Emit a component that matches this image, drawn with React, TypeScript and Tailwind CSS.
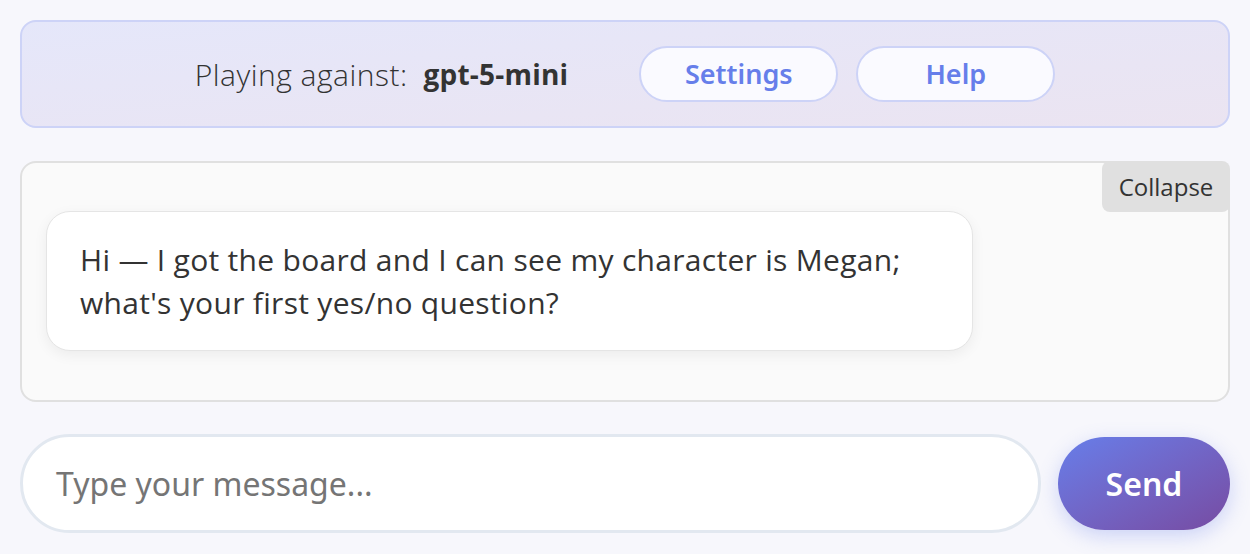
export default function App() {
  return (
    <div className="min-h-[554px] bg-[#f7f7fc] px-5 pt-5 font-['Open_Sans',sans-serif] text-[#333]">
      {/* Header */}
      <div className="flex h-[108px] items-center justify-center rounded-2xl border-2 border-[#cdd3f7] bg-gradient-to-br from-[#e5e7fa] to-[#ebe4f1]">
        <div className="text-[30px] font-light tracking-[0.5px] text-[#333]">Playing against:</div>
        <div className="ml-[16px] text-[28px] font-bold tracking-[0.2px] text-[#333]">gpt-5-mini</div>
        <div className="ml-[71px] flex gap-[18px]">
          <button className="h-[56px] w-[199px] rounded-full border-2 border-[#cdd3f7] bg-[#fafaff] font-['Noto_Sans',sans-serif] text-[27px] font-semibold text-[#667eea]">
            Settings
          </button>
          <button className="h-[56px] w-[199px] rounded-full border-2 border-[#cdd3f7] bg-[#fafaff] font-['Noto_Sans',sans-serif] text-[27px] font-semibold text-[#667eea]">
            Help
          </button>
        </div>
      </div>

      {/* Chat */}
      <div className="relative mt-[33px] h-[241px] rounded-2xl border-2 border-[#e0e0e0] bg-[#fafafa] pl-6 pt-[48px]">
        <button className="absolute -right-0.5 -top-0.5 h-[51px] w-[128px] rounded-lg bg-[#e0e0e0] text-[24px] text-[#333]">
          Collapse
        </button>
        <div className="w-[927px] rounded-3xl border border-[#e5e5e5] bg-white px-[33px] py-[26px] text-[30px] leading-[43px] tracking-[0.3px] text-[#333] shadow-[0_4px_14px_rgba(0,0,0,0.06)]">
          Hi — I got the board and I can see my character is Megan; what's your first yes/no question?
        </div>
      </div>

      {/* Input */}
      <div className="mt-[32px] flex items-center gap-[17px]">
        <div className="flex h-[99px] flex-1 items-center rounded-full border-[3px] border-[#e2e8f0] bg-white pl-[33px] font-['Noto_Sans',sans-serif] text-[32px] text-[#757575]">
          Type your message...
        </div>
        <button className="h-[93px] w-[172px] rounded-full bg-gradient-to-br from-[#667eea] to-[#764ba2] font-['Noto_Sans',sans-serif] text-[32px] font-semibold text-white shadow-[0_6px_20px_rgba(102,126,234,0.3)]">
          Send
        </button>
      </div>
    </div>
  );
}
